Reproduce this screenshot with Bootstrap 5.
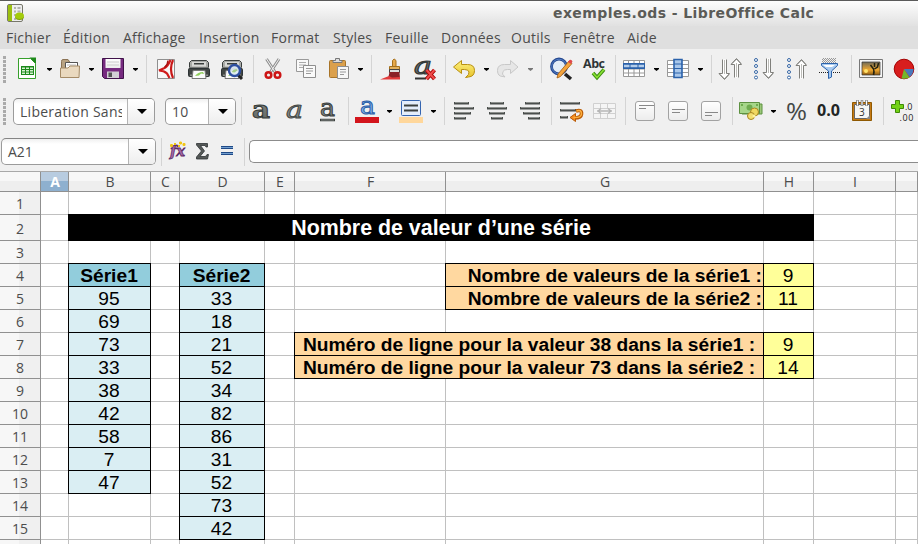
<!DOCTYPE html>
<html lang="fr">
<head>
<meta charset="utf-8">
<title>exemples.ods - LibreOffice Calc</title>
<meta name="viewport" content="width=device-width, initial-scale=1">
<link rel="stylesheet" href="https://cdn.jsdelivr.net/npm/bootstrap@5.3.0/dist/css/bootstrap.min.css">
<style>
body{width:918px;height:544px;background:#f0f0f0;font-family:"Open Sans","Noto Sans",sans-serif;font-size:14px;color:#4c4c4c}
.title-bar{height:26px;border-top:1px solid #5a5a5a;background:linear-gradient(#fdfdfd,#e1e1e1);font:bold 14px/24px "DejaVu Sans",sans-serif;color:#5b5b57;padding-left:6px}
.title-bar svg{margin-top:3px}
.title-text{margin-left:528px;letter-spacing:.41px}
.menu-row{height:23px;background:#dfdfdf;display:grid;grid-template-columns:57px 60px 76px 72px 62px 52px 56px 70px 52px 64px 60px;padding-left:6px;line-height:24px;letter-spacing:.25px}
.tools{display:grid;align-items:start;padding-left:3px;overflow:hidden}
.tools-std{height:40px;padding-top:8px;grid-template-columns:12px 31px 12px 30px 13px 31px 14px 8px 33px 33px 33px 8px 33px 33px 30px 14px 8px 34px 32px 7px 31px 13px 31px 14px 8px 33px 33px 7px 31px 13px 31px 14px 7px 34px 33px 33px 33px 8px 33px 26px}
.tools-fmt{height:44px;padding-top:10px;grid-template-columns:10px 152px 76px 8px 33px 33px 33px 7px 31px 13px 31px 14px 8px 33px 33px 33px 8px 33px 33px 8px 33px 33px 33px 6px 32px 14px 32px 34px 33px 7px 28px}
.tools-formula{height:38px;padding:5px 0 0 1px;grid-template-columns:160px 5px 27px 24px 27px 5px 1fr}
.grip{width:3px;height:27px;margin-top:-1px;background:repeating-linear-gradient(#aaa 0 3px,transparent 3px 4px)}
.split{width:1px;height:28px;margin-top:-2px;background:#d4d4d4}
.drop{width:7px;height:24px}
.ic{width:24px;height:24px;overflow:visible}
.combo{height:27px;border:1px solid #9b9b9b;border-top-color:#858585;border-radius:5px;background:linear-gradient(#f0f0f0,#fff 5px);overflow:hidden;line-height:26px;white-space:nowrap}
.combo-font{width:142px;margin-top:-1px}.combo-size{width:71px;margin-top:-1px}.combo-name{width:155px}
.combo span{overflow:hidden;padding-left:6px}
.combo-font span{letter-spacing:.27px;margin-right:5px}
.combo-size span{letter-spacing:.3px}
.combo i{width:27px;border-left:1px solid #b5b5b5;background:linear-gradient(#fff,#eee);padding-left:2px}
.combo i svg{width:10px;height:5px}
.formula{height:23px;margin-top:2px;border:1px solid #8c8c8c;border-right:0;border-radius:5px 0 0 5px;background:#fff}
.sheet{width:918px;table-layout:fixed;border-collapse:separate;border-spacing:0;background:#fff;border-top:1px solid #a8a8a8;font:19.2px/20px "Liberation Sans",Arial,sans-serif;color:#000}
.sheet-box{height:373px;overflow:hidden}
.sheet td,.sheet th{padding:2px 0 0;height:23px;border-right:1px solid #c0c0c0;border-bottom:1px solid #c0c0c0;text-align:center;white-space:nowrap}
.sheet .tall td,.sheet .tall th{height:26px}
.sheet thead th{padding:0 0 0 1px;height:20px;font:14px/19px "Open Sans",sans-serif;color:#4c4c4c;border-color:#909090;background:linear-gradient(#f7f7f7 50%,#eee 50%)}
.sheet thead .picked{background:linear-gradient(#b8cce0 48%,#8eb0cf 48%);color:#fff;font-weight:bold}
.sheet tbody th{font:14px/20px "Open Sans",sans-serif;color:#4c4c4c;border-color:#909090;background:linear-gradient(90deg,#f7f7f7 19px,#f0f0f0 19px)}
.sheet td.k{position:relative;border-color:#000;box-shadow:-1px 0 #000,0 -1px #000,-1px -1px #000}
.sheet td.k:not(.lb,.ti){padding-right:1px}
.sheet td.hd{background:#92cddc;font-weight:bold}
.sheet td.se{background:#daeef3}
.sheet td.lb{background:#ffd8a0;font-weight:bold}
.sheet td.rt{text-align:right;padding-right:1px}
.sheet td.rs{background:#ffff99}
.sheet td.ti{background:#000;color:#fff;font-weight:bold;font-size:21.4px;padding-top:1px}
</style>
<script src="https://cdn.jsdelivr.net/npm/bootstrap@5.3.0/dist/js/bootstrap.bundle.min.js"></script>
</head>
<body class="m-0 overflow-hidden">
<svg width="0" height="0" class="position-absolute" aria-hidden="true">
<defs>
<linearGradient id="gy" x2="0" y2="1"><stop stop-color="#9a9c98"/><stop offset="1" stop-color="#2e3436"/></linearGradient>
<linearGradient id="wh" x2="0" y2="1"><stop stop-color="#fff"/><stop offset="1" stop-color="#ececec"/></linearGradient>
<linearGradient id="gold" x2="0" y2="1"><stop stop-color="#fdf17e"/><stop offset="1" stop-color="#e8c32c"/></linearGradient>
<linearGradient id="let" x2="0" y2="1"><stop stop-color="#8c8f8c"/><stop offset="1" stop-color="#5d625f"/></linearGradient>
<linearGradient id="sun" x2="0" y2="1"><stop stop-color="#6f6a58"/><stop offset=".6" stop-color="#f0a830"/><stop offset="1" stop-color="#8a5a14"/></linearGradient>
<pattern id="dots" width="2" height="2" patternUnits="userSpaceOnUse"><path d="M0 0h1v1H0zM1 1h1v1H1z" fill="#999"/></pattern>
<symbol id="dn" viewBox="0 0 7 24"><path d="M1 11h5v1L3.5 14 1 12z" fill="#000"/></symbol>
<symbol id="tri" viewBox="0 0 10 5"><path d="M0 0h10L5 5z" fill="#000"/></symbol>
<symbol id="printer" viewBox="0 0 24 24"><path d="M4.500 3.500h15l2 2v7.500h-19V5.500z" fill="#a9aba7" stroke="#3a3e3d"/><path d="M5 5h14v4.500H5z" fill="#d8d9d6"/><path d="M7 6h10v1.500H7z" fill="#3a3e3d"/><path d="M2 10h20v2H2z" fill="#777a77"/><path d="M1.500 12.500q0-1 1-1h19q1 0 1 1v6q0 1-1 1h-19q-1 0-1-1z" fill="#414644" stroke="#2e3436"/><path d="M3 17.500h18v1.500H3z" fill="#8c8f8b"/><path d="M6 13.500h12l1 8H5z" fill="#fbfbfb" stroke="#777"/><path d="M8 19q3-4 8-4l1 2-3-.5-2 2z" fill="#8fce5b"/></symbol>
<symbol id="down" viewBox="0 0 12 24"><path d="M4.500 2.500v14H1l5.500 6 5-6H8.500v-14" fill="#fff" stroke="#80807c"/><path d="M2 17.500 6.500 22 11 17.500" fill="none" stroke="#80807c"/><path d="M6.500 3v14" stroke="#bcbcb8"/></symbol>
<symbol id="up" viewBox="0 0 12 24"><path d="M4.500 21.500v-13H1l5.500-6 5 6H8.500v13" fill="#fff" stroke="#80807c"/><path d="M2 7.500 6.500 3 11 7.500" fill="none" stroke="#80807c"/><path d="M6.500 7v14" stroke="#bcbcb8"/></symbol>
</defs>
</svg>

<header class="title-bar d-flex">
<svg width="19" height="19" viewBox="0 0 19 19"><rect x="1.500" y=".5" width="15" height="17" rx="1.500" fill="#eee" stroke="#77776a"/><path d="M2 1h4v16H2z" fill="#9bbf10"/><path d="M8 3h2v2H8zm3.500 0h3v2h-3zM8 6.500h2v2H8zm3.500 0h3v2h-3zM8 10h2v2H8zM8 14h2v2H8z" fill="#b3b3ae"/><ellipse cx="13.500" cy="12" rx="4.500" ry="3.500" fill="#a4cc0c"/><path d="M9 12.500v1q1 2.500 4.500 2.500t4.500-2.500v-1q-1 2.500-4.500 2.500T9 12.500z" fill="#7e9e08"/></svg>
<div class="title-text">exemples.ods - LibreOffice Calc</div>
</header>
<nav class="menu-row"><span>Fichier</span><span>Édition</span><span>Affichage</span><span>Insertion</span><span>Format</span><span>Styles</span><span>Feuille</span><span>Données</span><span>Outils</span><span>Fenêtre</span><span>Aide</span></nav>

<div class="tools tools-std">
<div class="grip"></div>
<svg class="ic"><path d="M3.500 1.500h12l5 5v15h-17z" fill="#fff" stroke="#37a02c"/><path d="M14.500.5H21V7z" fill="#1e8a1a"/><path d="M6 9h13v9H6z" fill="#1c8a1c"/><path d="M7 10.500h3v1.500H7zm4 0h3v1.500h-3zm4 0h3v1.500h-3zM7 13h3v1.500H7zm4 0h3v1.500h-3zm4 0h3v1.500h-3zM7 15.500h3V17H7zm4 0h3V17h-3zm4 0h3V17h-3z" fill="#d5f0d0"/></svg>
<svg class="drop"><use href="#dn"/></svg>
<svg class="ic"><path d="M3.500 19V4.500q0-2 1.500-2h5l2 3h7.500V19z" fill="#b9a383" stroke="#8b7355"/><path d="M7.500 5.500h12v7h-12z" fill="#fff" stroke="#555"/><path d="M9 8h9" stroke="#bbb"/><path d="M2.500 20.500V11H10l2-2h9.500l-.5 11.500z" fill="#ead9bf" stroke="#a58b67"/></svg>
<svg class="drop"><use href="#dn"/></svg>
<svg class="ic"><path d="M1.500 1.500h21v20h-19l-2-2z" fill="#762a7f" stroke="#40124a"/><path d="M4.500 2h15v9h-15z" fill="url(#wh)"/><path d="M6 5h12M6 8h12" stroke="#ccc"/><path d="M6 14.500h12V21H6z" fill="#d2d0d5"/><path d="M7.500 15.500h3.500V20H7.500z" fill="#555"/></svg>
<svg class="drop"><use href="#dn"/></svg>
<div class="split"></div>
<svg class="ic"><path d="M3.500 2.500h17v19h-17z" fill="#f8f8f8" stroke="#8f8f8f"/><path d="M16.500 3Q14 9 10.500 11L5 13.500q5 0 8 3l2.500 4.500" fill="none" stroke="#d01c1c" stroke-width="2.200"/><path d="M14 3.500q0 4-3.500 7" fill="none" stroke="#a11" stroke-width="1.500"/><path d="M19 3q-4 9 0 18" fill="none" stroke="#c81818" stroke-width="2.200"/></svg>
<svg class="ic"><use href="#printer"/></svg>
<svg class="ic"><use href="#printer"/><path d="m18 18 4 4" stroke="#222" stroke-width="3"/><circle cx="14.500" cy="13.500" r="5.500" fill="#e4f0fa" fill-opacity=".9" stroke="#2d4fa0" stroke-width="2.400"/><path d="M11.500 15q2-3 5-3l1 1.500-3 2z" fill="#a5cf87"/></svg>
<div class="split"></div>
<svg class="ic"><path d="M5.500 2 14 15m4-13L9.500 15" stroke="#8f8f8f" stroke-width="3"/><path d="M5.500 2 14 15m4-13L9.500 15" stroke="#f2f2f2"/><circle cx="7.500" cy="18" r="2.800" fill="none" stroke="#cc1515" stroke-width="2.500"/><circle cx="16.500" cy="18" r="2.800" fill="none" stroke="#cc1515" stroke-width="2.500"/></svg>
<svg class="ic"><path d="M2.500 2.500h12v12h-12z" fill="#fafafa" stroke="#999"/><path d="M5 5.500h7M5 8h7M5 10.500h5" stroke="#aaa"/><path d="M9.500 8.500h12v12h-12z" fill="#fafafa" stroke="#8e8e8e"/><path d="M12 11.500h7M12 14h7M12 16.500h5" stroke="#999"/></svg>
<svg class="ic"><rect x="2.500" y="3.500" width="16" height="17" rx="1" fill="#dba04c" stroke="#a87428"/><path d="M6 5.500v-2h2.500v-2h4v2H15v2z" fill="#ddd" stroke="#777"/><path d="M10.500 9.500h11v12h-11z" fill="#f7f7f7" stroke="#8e8e8e"/><path d="M13 12.500h6M13 15h6M13 17.500h4" stroke="#999"/></svg>
<svg class="drop"><use href="#dn"/></svg>
<div class="split"></div>
<svg class="ic"><path d="M13.500 10V3.500q1.500-3 3.500 0V10z" fill="#e6a84a" stroke="#a5701c"/><path d="M10.500 13V9.500h10V13z" fill="#e4b15c" stroke="#a5701c"/><path d="M10.500 12.500h10v3h-10z" fill="#ddd" stroke="#444"/><path d="M10.500 15h10l.5 6.500-12 .5z" fill="#8a2026"/><path d="M1 22.500 10 19l3 1.500 8-.5v2.500z" fill="#e23b3b"/></svg>
<svg class="ic"><text x="1" y="17" font-family="DejaVu Serif" font-size="25" font-style="italic" fill="url(#let)" stroke="#353a38" stroke-width="1.200" textLength="18" lengthAdjust="spacingAndGlyphs">a</text><path d="M2 21.500h11" stroke="#333" stroke-width="2"/><path d="m13.500 13 8 9m0-9-8 9" stroke="#a00" stroke-width="4"/><path d="m13.500 13 8 9m0-9-8 9" stroke="#ef4b4b" stroke-width="2"/></svg>
<div class="split"></div>
<svg class="ic"><path d="M9.500 3.500v4h6q7 0 7 6t-6 6.500l-3 .5q4-3 3.500-5.500-.5-2.500-4.500-2.500h-3v4l-8-6.500z" fill="url(#gold)" stroke="#b89012"/></svg>
<svg class="drop"><use href="#dn"/></svg>
<svg class="ic"><path d="M14.500 3.500v4h-6q-7 0-7 6t5.500 6l2 .5q-4-3-2-5.500 1-2 4.500-2h3v4l7.500-6.500z" fill="#e6e6e6" stroke="#c8c8c8"/></svg>
<svg class="drop" opacity=".5"><use href="#dn"/></svg>
<div class="split"></div>
<svg class="ic"><path d="m16 17 6 5" stroke="#222" stroke-width="3.500"/><circle cx="10" cy="9.500" r="7.500" fill="#e4edf7" stroke="#24478f" stroke-width="2.800"/><circle cx="10" cy="9.500" r="7.300" fill="none" stroke="#5580c6"/><path d="m8 21 1-4 11-13 3 2.500-11.500 13z" fill="#f4a43d" stroke="#a25c10" stroke-width=".8"/><path d="m19 5 1.500-2q2-1 3 1.500L22 7z" fill="#e0484c"/></svg>
<svg class="ic"><text x="1" y="11" font-family="Open Sans" font-size="12.500" font-weight="bold" fill="#2e3436" textLength="22">Abc</text><path d="m11 16 4 4.500 7-8" fill="none" stroke="#3e8e12" stroke-width="3.600"/><path d="m11 16 4 4.500 7-8" fill="none" stroke="#8ae234" stroke-width="1.600"/></svg>
<div class="split"></div>
<svg class="ic"><path d="M1.500 3.500h21v16h-21z" fill="#fff" stroke="#999"/><path d="M1 12h22M1 16h22M6.500 3v17M12 3v17M17.500 3v17" stroke="#999"/><path d="M1.500 6.500h21v5h-21z" fill="#b4cdea" stroke="#2b62ab"/><path d="M1 7h22M1 11h22" stroke="#2b62ab" stroke-width="1.500"/><path d="M8 7v4m8-4v4" stroke="#2b62ab"/></svg>
<svg class="drop"><use href="#dn"/></svg>
<svg class="ic"><path d="M1.500 3.500h21v16h-21z" fill="#fff" stroke="#999"/><path d="M1 7.500h22M1 11.500h22M1 15.500h22" stroke="#999"/><path d="M8 2.500h8v18H8z" fill="#a9c7ea" stroke="#2b62ab" stroke-width="1.600"/><path d="M8 7h8m-8 4.500h8M8 16h8" stroke="#2b62ab"/></svg>
<svg class="drop"><use href="#dn"/></svg>
<div class="split"></div>
<svg class="ic"><use href="#down" x="0" width="12" height="24"/><use href="#up" x="12" width="12" height="24" y="-1"/></svg>
<svg class="ic"><g fill="#fff" stroke="#3465a4"><circle cx="4" cy="3" r="1.500"/><circle cx="4" cy="9" r="1.500"/><circle cx="4" cy="15" r="1.500"/><circle cx="4" cy="20.500" r="1.500"/></g><use href="#down" x="10" y="-1" width="12" height="24"/></svg>
<svg class="ic"><g fill="#fff" stroke="#3465a4"><circle cx="4" cy="3" r="1.500"/><circle cx="4" cy="9" r="1.500"/><circle cx="4" cy="15" r="1.500"/><circle cx="4" cy="20.500" r="1.500"/></g><use href="#up" x="10" width="12" height="24"/></svg>
<svg class="ic"><path d="M4 1h14v5H4z" fill="url(#dots)"/><path d="M1 15.500h22" stroke="#222" stroke-dasharray="1 1"/><path d="M3.500 6.500h16v2l-6 5.500v6l-3 1.500V14l-7-5.500z" fill="#a9cbf0" stroke="#2b62ab"/><path d="M5 8h12l-3 2H8z" fill="#fff"/></svg>
<div class="split"></div>
<svg class="ic"><path d="M.5 2.500h23v18H.5z" fill="#f5f5f5" stroke="#777"/><path d="M3 5h18v13H3z" fill="url(#sun)" stroke="#333" stroke-width=".7"/><circle cx="7" cy="14" r="2" fill="#ffe26a"/><path d="M14.500 18q1-4 0-6l-3-4m4 4 3-2 1-4m-4 4V6" fill="none" stroke="#221" stroke-width="1.500"/></svg>
<svg class="ic"><circle cx="12" cy="12" r="9.800" fill="#d81e1e" stroke="#a40000"/><path d="M12 12h9.500q0 5-4 8z" fill="#4a79bd"/><path d="m12 12 5.500 8.500q-4 2-8 1z" fill="#73b72b"/></svg>
</div>

<div class="tools tools-fmt">
<div class="grip"></div>
<div class="combo combo-font d-flex"><span class="flex-grow-1">Liberation Sans</span><i class="d-flex flex-shrink-0 align-items-center justify-content-center"><svg><use href="#tri"/></svg></i></div>
<div class="combo combo-size d-flex"><span class="flex-grow-1">10</span><i class="d-flex flex-shrink-0 align-items-center justify-content-center"><svg><use href="#tri"/></svg></i></div>
<div class="split"></div>
<svg class="ic"><text x="3" y="18.500" font-family="DejaVu Serif" font-size="25" font-weight="bold" fill="url(#let)" stroke="#353a38" stroke-width="1" textLength="18" lengthAdjust="spacingAndGlyphs">a</text></svg>
<svg class="ic"><text x="4" y="18.500" font-family="DejaVu Serif" font-size="25" font-style="italic" fill="#858986" stroke="#454a48" stroke-width="1" textLength="17" lengthAdjust="spacingAndGlyphs">a</text></svg>
<svg class="ic"><text x="5" y="16.500" font-family="DejaVu Serif" font-size="24" fill="#858986" stroke="#3b403e" stroke-width="1" textLength="15" lengthAdjust="spacingAndGlyphs">a</text><path d="M5 21h15" stroke="#3b403e" stroke-width="2.500"/><path d="M6 21h13" stroke="#9a9d9a" stroke-width=".8"/></svg>
<div class="split"></div>
<svg class="ic"><text x="5" y="14.500" font-family="DejaVu Serif" font-size="24" fill="#8ab4ea" stroke="#2b5fa8" stroke-width="1" textLength="15" lengthAdjust="spacingAndGlyphs">a</text><path d="M0 18h24v6H0z" fill="#d3151c"/></svg>
<svg class="drop"><use href="#dn"/></svg>
<svg class="ic"><rect x="2.500" y="1.500" width="19" height="15" rx="1" fill="#e4eefb" stroke="#3565b0"/><path d="M5 6.500h14M5 11.500h14" stroke="#3b403e" stroke-width="2"/><path d="M0 18h24v6H0z" fill="#ffd79b"/></svg>
<svg class="drop"><use href="#dn"/></svg>
<div class="split"></div>
<svg class="ic"><path d="M2 3h15v2.500H2zM2 8h20v2.500H2zM2 13h17v2.500H2zM2 18h12v2.500H2z" fill="#4a4e4c"/><path d="M3 3.500h13M3 8.500h18M3 13.500h15M3 18.500h10" stroke="#8d908d"/></svg>
<svg class="ic"><path d="M5 3h14v2.500H5zM2 8h20v2.500H2zM4 13h16v2.500H4zM6 18h12v2.500H6z" fill="#4a4e4c"/><path d="M6 3.500h12M3 8.500h18M5 13.500h14M7 18.500h10" stroke="#8d908d"/></svg>
<svg class="ic"><path d="M7 3h15v2.500H7zM2 8h20v2.500H2zM5 13h17v2.500H5zM10 18h12v2.500H10z" fill="#4a4e4c"/><path d="M8 3.500h13M3 8.500h18M6 13.500h15M11 18.500h10" stroke="#8d908d"/></svg>
<div class="split"></div>
<svg class="ic"><path d="M1 3h20v2.500H1zM1 10h16v2.500H1zM1 17h8v2.500H1z" fill="#4a4e4c"/><path d="M2 3.500h18M2 10.500h14M2 17.500h6" stroke="#8d908d"/><path d="M17 12q6-2 5.500 3-.5 4.500-8.500 4" fill="none" stroke="#b95a05" stroke-width="3.600"/><path d="M16.500 14.500v8L11 18.500z" fill="#f58b1e" stroke="#b95a05"/><path d="M17.500 12q5-2 5 3-.5 4-8 3.500" fill="none" stroke="#fcaf3e" stroke-width="1.600"/></svg>
<svg class="ic"><path d="M1.500 4.500h22v15h-22zM1.500 9.500h22M1.500 14.500h22M8.500 4v5m7-5v5m-7 6v4m7-4v4" fill="#f5f5f5" stroke="#d0d0d0"/><path d="M5 12h15M9 9.500 6 12l3 2.500m7-5 3 2.500-3 2.500" fill="none" stroke="#b6b6b6" stroke-width="1.300"/></svg>
<div class="split"></div>
<svg class="ic"><rect x="2.500" y="2.500" width="19" height="19" rx="2.500" fill="url(#wh)" stroke="#a2a2a2"/><path d="M6 6.500h15M6 9.500h7" stroke="#888"/></svg>
<svg class="ic"><rect x="2.500" y="2.500" width="19" height="19" rx="2.500" fill="url(#wh)" stroke="#a2a2a2"/><path d="M6 10.500h13M6 13.500h8" stroke="#888"/></svg>
<svg class="ic"><rect x="2.500" y="2.500" width="19" height="19" rx="2.500" fill="url(#wh)" stroke="#a2a2a2"/><path d="M6 13.500h13M6 16.500h7" stroke="#888"/></svg>
<div class="split"></div>
<svg class="ic"><path d="M4 5h20v10H4z" fill="#9cc97a" stroke="#5d9141"/><path d="M1.500 3.500h20v11h-20z" fill="#a6d68a" stroke="#5d9141"/><circle cx="11.500" cy="8.500" r="3" fill="#6fab4f"/><path d="M3 5h2v2H3zm15 0h2v2h-2z" fill="#6fab4f"/><circle cx="16.500" cy="13" r="4" fill="#f0d860" stroke="#a68520"/><circle cx="13" cy="17" r="3.500" fill="#f4df70" stroke="#a68520"/><circle cx="16" cy="17" r="1.500" fill="#fff3a0"/></svg>
<svg class="drop"><use href="#dn"/></svg>
<svg class="ic"><text x="2" y="20.500" font-family="Open Sans" font-size="23" fill="#444846" textLength="21" lengthAdjust="spacingAndGlyphs">%</text></svg>
<svg class="ic"><text x="1" y="17" font-family="Open Sans" font-size="15.500" font-weight="bold" fill="#222524" textLength="23" lengthAdjust="spacingAndGlyphs">0.0</text></svg>
<svg class="ic"><path d="M2.500 3.500h19v18h-19z" fill="#c57a14" stroke="#8f5902"/><path d="M4.500 5.500h15v14h-15z" fill="#f6f6f4" stroke="#666"/><path d="M7.500 1v6m4.500-6v6m4.500-6v6" stroke="#777" stroke-width="2.500"/><path d="M7.500 1.500v5m4.500-5v5m4.500-5v5" stroke="#fff"/><text x="9" y="17" font-family="Open Sans" font-size="10" fill="#333">3</text><path d="m16 20 4-4v4z" fill="#888"/></svg>
<div class="split"></div>
<svg class="ic"><path d="M5.500 1.500h4v4h4v4h-4v4h-4v-4h-4v-4h4z" fill="#73d216" stroke="#3f8a06"/><text x="15" y="11" font-family="Open Sans" font-size="9" fill="#222">.0</text><text x="9.500" y="22" font-family="Open Sans" font-size="9" fill="#222" textLength="14">.00</text></svg>
</div>

<div class="tools tools-formula">
<div class="combo combo-name d-flex"><span class="flex-grow-1">A21</span><i class="d-flex flex-shrink-0 align-items-center justify-content-center"><svg><use href="#tri"/></svg></i></div>
<div class="split mt-0"></div>
<svg class="ic"><text x="4" y="18" font-family="DejaVu Serif" font-size="15" font-style="italic" font-weight="bold" fill="#a56aa8" stroke="#5c2a66" stroke-width=".8" textLength="15" lengthAdjust="spacingAndGlyphs">fx</text><path d="M4 7.500h3M5.500 6v3M8 6h2M13 5h3m-1.500-1.500v3M16.500 6.500h3m-1.500-1.500v3M12 8h2" stroke="#f0c514" stroke-width="1.800"/></svg>
<svg class="ic"><path d="M3.500 5.500h11V9h-1.500l-1-1.500H7.500L11.500 13l-4.500 5.500h5.500l1.500-2h1.500l-1 4.500h-11v-2l5-6-5-6z" fill="#555957" stroke="#2e3436" stroke-width=".8"/></svg>
<svg class="ic"><path d="M4 9.500h12M4 15.500h12" stroke="#204a87" stroke-width="3"/><path d="M4 9.500h12M4 15.500h12" stroke="#729fcf"/></svg>
<div class="split mt-0"></div>
<div class="formula"></div>
</div>

<main class="sheet-box">
<table class="sheet">
<colgroup><col width="41"><col width="28"><col width="82"><col width="29"><col width="85"><col width="30"><col width="151"><col width="318"><col width="50"><col width="82"><col width="22"></colgroup>
<thead><tr><th></th><th class="picked">A</th><th>B</th><th>C</th><th>D</th><th>E</th><th>F</th><th>G</th><th>H</th><th>I</th><th></th></tr></thead>
<tbody>
<tr><th>1</th><td></td><td></td><td></td><td></td><td></td><td></td><td></td><td></td><td></td><td></td></tr>
<tr class="tall"><th>2</th><td></td><td class="k ti" colspan="7">Nombre de valeur d’une série</td><td></td><td></td></tr>
<tr><th>3</th><td></td><td></td><td></td><td></td><td></td><td></td><td></td><td></td><td></td><td></td></tr>
<tr><th>4</th><td></td><td class="k hd">Série1</td><td></td><td class="k hd">Série2</td><td></td><td></td><td class="k lb rt">Nombre de valeurs de la série1 :</td><td class="k rs">9</td><td></td><td></td></tr>
<tr><th>5</th><td></td><td class="k se">95</td><td></td><td class="k se">33</td><td></td><td></td><td class="k lb rt">Nombre de valeurs de la série2 :</td><td class="k rs">11</td><td></td><td></td></tr>
<tr><th>6</th><td></td><td class="k se">69</td><td></td><td class="k se">18</td><td></td><td></td><td></td><td></td><td></td><td></td></tr>
<tr><th>7</th><td></td><td class="k se">73</td><td></td><td class="k se">21</td><td></td><td class="k lb" colspan="2">Numéro de ligne pour la valeur 38 dans la série1 :</td><td class="k rs">9</td><td></td><td></td></tr>
<tr><th>8</th><td></td><td class="k se">33</td><td></td><td class="k se">52</td><td></td><td class="k lb" colspan="2">Numéro de ligne pour la valeur 73 dans la série2 :</td><td class="k rs">14</td><td></td><td></td></tr>
<tr><th>9</th><td></td><td class="k se">38</td><td></td><td class="k se">34</td><td></td><td></td><td></td><td></td><td></td><td></td></tr>
<tr><th>10</th><td></td><td class="k se">42</td><td></td><td class="k se">82</td><td></td><td></td><td></td><td></td><td></td><td></td></tr>
<tr><th>11</th><td></td><td class="k se">58</td><td></td><td class="k se">86</td><td></td><td></td><td></td><td></td><td></td><td></td></tr>
<tr><th>12</th><td></td><td class="k se">7</td><td></td><td class="k se">31</td><td></td><td></td><td></td><td></td><td></td><td></td></tr>
<tr><th>13</th><td></td><td class="k se">47</td><td></td><td class="k se">52</td><td></td><td></td><td></td><td></td><td></td><td></td></tr>
<tr><th>14</th><td></td><td></td><td></td><td class="k se">73</td><td></td><td></td><td></td><td></td><td></td><td></td></tr>
<tr><th>15</th><td></td><td></td><td></td><td class="k se">42</td><td></td><td></td><td></td><td></td><td></td><td></td></tr>
<tr><th></th><td></td><td></td><td></td><td></td><td></td><td></td><td></td><td></td><td></td><td></td></tr>
</tbody>
</table>
</main>
</body>
</html>
